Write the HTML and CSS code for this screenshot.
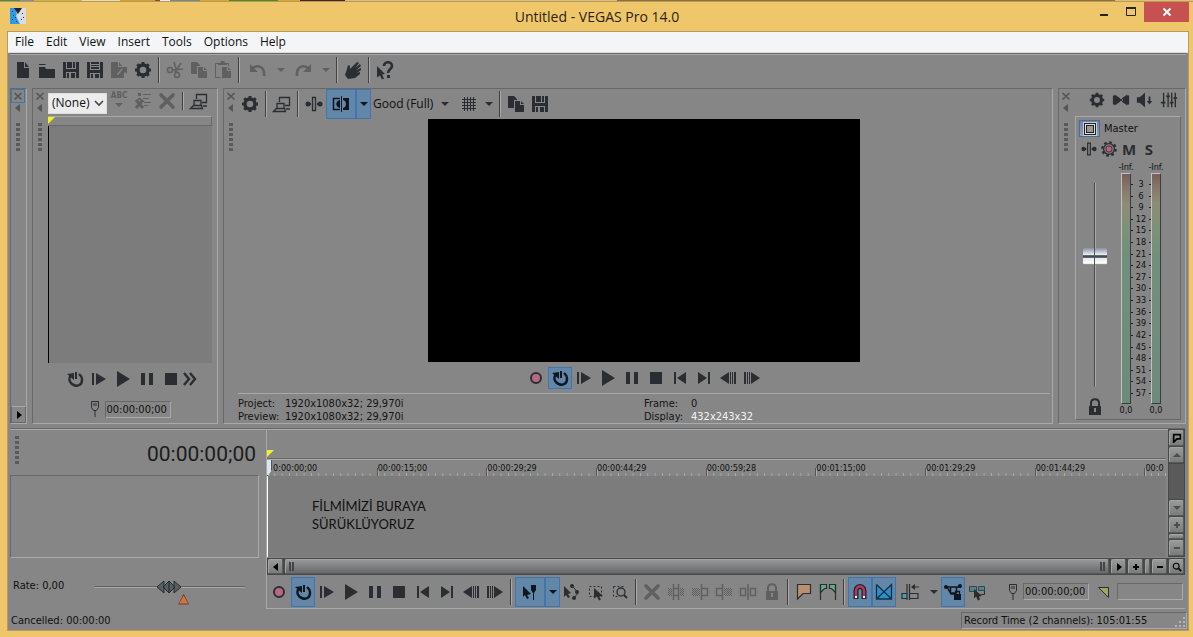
FILE: index.html
```html
<!DOCTYPE html>
<html lang="en">
<head>
<meta charset="utf-8">
<title>Untitled - VEGAS Pro 14.0</title>
<link rel="stylesheet" href="styles.css">
</head>
<body>
<svg class="defs" width="0" height="0" aria-hidden="true">
  <defs>
    <pattern id="hatch" width="2" height="2" patternUnits="userSpaceOnUse"><path d="M0 0h1v1H0zM1 1h1v1H1z" fill="#606060"/></pattern>
  </defs>
  <symbol id="i-new" viewBox="0 0 20 20"><path fill="currentColor" d="M4 2h7v6h5v10H4z"/><path fill="currentColor" d="M12 2l4 5h-4z"/></symbol>
  <symbol id="i-open" viewBox="0 0 20 20"><path fill="currentColor" d="M2 4h6l1 1H2zM2 7h6l1 2h9v9H2z"/></symbol>
  <symbol id="i-save" viewBox="0 0 20 20"><path fill="currentColor" d="M2 2h3v7h10V2h3v16h-3v-6H5v6H2zM6 2h5v6H6zM12 2h2v6h-2zM6 13h2v5H6zM10 13h4v5h-4z"/></symbol>
  <symbol id="i-saveas" viewBox="0 0 20 20"><path fill="currentColor" d="M2 2h3v8h10V2h3v16h-3v-5H5v5H2zM6 2h8v2H6zM6 5h8v1H6zM6 7h8v2H6zM6 14h2v4H6zM10 14h4v4h-4z"/></symbol>
  <symbol id="i-render" viewBox="0 0 20 20"><path fill="currentColor" d="M2 2h7v5h5l-6 7 2 2 5-4v6H2zM10 2l3 4h-3zM11 7h7v7l-2-2-5 5-2-2 5-6z"/></symbol>
  <symbol id="i-gear" viewBox="0 0 20 20"><circle cx="10" cy="10" r="5" fill="none" stroke="currentColor" stroke-width="3.4"/><path stroke="currentColor" stroke-width="3" d="M10 2v3M10 15v3M2 10h3M15 10h3M4.300 4.300l2 2M13.700 13.700l2 2M4.300 15.700l2-2M13.700 6.300l2-2"/></symbol>
  <symbol id="i-cut" viewBox="0 0 20 20"><g fill="none" stroke="currentColor" stroke-width="1.600"><circle cx="5" cy="10" r="2.500"/><circle cx="12" cy="15" r="2.500"/><path d="M7 10l11-1M12 12L9 2M10 12l6-9"/></g></symbol>
  <symbol id="i-copy" viewBox="0 0 20 20"><path fill="currentColor" d="M2 2h6l3 3v1H8v8H2zM9 7h5v4h4v7H9zM15 7l3 3h-3z"/></symbol>
  <symbol id="i-paste" viewBox="0 0 20 20"><path fill="none" stroke="currentColor" d="M7.500 17.500h-5v-14h13V6"/><path fill="currentColor" d="M5 3h2l1-2h3l1 2h2v2H5zM9 7h5v4h4v7H9zM15 7l3 3h-3z"/></symbol>
  <symbol id="i-undo" viewBox="0 0 20 20"><path d="M4 9c5-5 13-3 12 7" fill="none" stroke="currentColor" stroke-width="2.600"/><path fill="currentColor" d="M2 4v8h8z"/></symbol>
  <symbol id="i-redo" viewBox="0 0 20 20"><path d="M16 9C11 4 3 6 4 16" fill="none" stroke="currentColor" stroke-width="2.600"/><path fill="currentColor" d="M18 4v8h-8z"/></symbol>
  <symbol id="i-caret" viewBox="0 0 10 10"><path fill="currentColor" d="M1 3h8L5 7z"/></symbol>
  <symbol id="i-hand" viewBox="0 0 20 20"><path fill="currentColor" d="M4 9l1-4 2 1v3l7-7 2 1-4 5 5-4 1 2-5 4 5-2v2l-4 3 3-1v2l-5 4-7 1-3-4z"/></symbol>
  <symbol id="i-help" viewBox="0 0 20 20"><path fill="currentColor" d="M2 6l8 8-3 .5 2 4-2 1-2-4-3 2z"/><path d="M9 6c0-5 8-5 8 0 0 3-4 3-4 7" fill="none" stroke="currentColor" stroke-width="2.600"/><path fill="currentColor" d="M12 15h3v3h-3z"/></symbol>
  <symbol id="i-x" viewBox="0 0 10 10"><path stroke="currentColor" stroke-width="1.700" d="M1.500 2l7 6.500M8.500 2l-7 6.500"/></symbol>
  <symbol id="i-left" viewBox="0 0 10 10"><path fill="currentColor" d="M7 1v8L2 5z"/></symbol>
  <symbol id="i-right" viewBox="0 0 10 10"><path fill="currentColor" d="M3 1v8l5-4z"/></symbol>
  <symbol id="i-up" viewBox="0 0 10 10"><path fill="currentColor" d="M1 7h8L5 3z"/></symbol>
  <symbol id="i-list" viewBox="0 0 20 20"><path fill="currentColor" d="M5 2h3v3H5zM10 3h8v1h-8zM5 7h3v2H5zM10 7h6v1h-6zM11 11h7v1h-7zM11 14h4v1h-4z"/><path d="M3 9l7 8M10 9l-7 8" stroke="currentColor" stroke-width="3"/></symbol>
  <symbol id="i-bigx" viewBox="0 0 20 20"><path stroke="currentColor" stroke-width="3.600" stroke-linecap="round" d="M4 4l12 12M16 4L4 16"/></symbol>
  <symbol id="i-monitor" viewBox="0 0 20 20"><path fill="none" stroke="currentColor" stroke-width="1.300" d="M7.500 8V3.500h10v8H13M5 9.500h7v5H5zM1.500 17.500l3-3h8l1 3zM14 15h4"/></symbol>
  <symbol id="i-fx" viewBox="0 0 20 20"><path stroke="currentColor" stroke-width="2" d="M3 10h4M13 10h4"/><path fill="none" stroke="currentColor" stroke-width="1.300" d="M8.500 3.500h3v13h-3z"/><circle cx="4" cy="10" r="2.500" fill="currentColor"/><circle cx="16" cy="10" r="2.500" fill="currentColor"/></symbol>
  <symbol id="i-split" viewBox="0 0 20 20"><path fill="none" stroke="currentColor" stroke-width="1.500" d="M9 4.500H2.500v11H9"/><path fill="currentColor" d="M10 2h1v16h-1zM12 4h6v12h-6v-2c4-1 4-7 0-8zM9 6v8c-5-1-5-7 0-8z"/></symbol>
  <symbol id="i-grid" viewBox="0 0 20 20"><path stroke="currentColor" d="M5.500 3v14M8.500 3v14M11.500 3v14M14.500 3v14M3 5.500h14M3 8.500h14M3 11.500h14M3 14.500h14"/></symbol>
  <symbol id="i-rec" viewBox="0 0 20 20"><circle cx="10" cy="10" r="5" fill="#b86880" stroke="#2b2e33" stroke-width="2"/></symbol>
  <symbol id="i-loop" viewBox="0 0 20 20"><path d="M6 6c-7 10 12 16 11 4 0-3-2-4-3-5" fill="none" stroke="currentColor" stroke-width="2.400"/><path fill="currentColor" d="M2 5l7-1v7z"/><path stroke="currentColor" stroke-width="2" d="M11 3v7"/></symbol>
  <symbol id="i-playstart" viewBox="0 0 20 20"><path fill="currentColor" d="M3 4h2v12H3zM7 4v12l10-6z"/></symbol>
  <symbol id="i-play" viewBox="0 0 20 20"><path fill="currentColor" d="M4 2v16l13-8z"/></symbol>
  <symbol id="i-pause" viewBox="0 0 20 20"><path fill="currentColor" d="M4 4h4v12H4zM12 4h4v12h-4z"/></symbol>
  <symbol id="i-stop" viewBox="0 0 20 20"><path fill="currentColor" d="M4 4h12v12H4z"/></symbol>
  <symbol id="i-first" viewBox="0 0 20 20"><path fill="currentColor" d="M4 4h2v12H4zM16 4v12l-9-6z"/></symbol>
  <symbol id="i-last" viewBox="0 0 20 20"><path fill="currentColor" d="M14 4h2v12h-2zM4 4v12l9-6z"/></symbol>
  <symbol id="i-prev" viewBox="0 0 20 20"><path fill="currentColor" d="M11 4v12L2 10zM12 4h1v12h-1zM14 4h1v12h-1zM16 4h2v12h-2z"/></symbol>
  <symbol id="i-next" viewBox="0 0 20 20"><path fill="currentColor" d="M9 4v12l9-6zM7 4h1v12H7zM5 4h1v12H5zM2 4h2v12H2z"/></symbol>
  <symbol id="i-more" viewBox="0 0 20 20"><path fill="none" stroke="currentColor" stroke-width="2.400" d="M4 4l5 6-5 6M10 4l5 6-5 6"/></symbol>
  <symbol id="i-pin" viewBox="0 0 10 20"><path fill="none" stroke="currentColor" d="M1.500 2.500h7v6l-2 3h-3l-2-3zM5 12v6M4 4v3M6 4v3"/></symbol>
  <symbol id="i-lock" viewBox="0 0 20 20"><path d="M6 9V6c0-5 8-5 8 0v3" fill="none" stroke="currentColor" stroke-width="2"/><path fill="currentColor" fill-rule="evenodd" d="M4 9h12v9H4zm5 2v4h2v-4z"/></symbol>
  <symbol id="i-dim" viewBox="0 0 20 20"><path fill="currentColor" d="M1 5h2v10H1zM3 4l6 4v4l-6 4zM19 5h-2v10h2zM17 4l-6 4v4l6 4zM8 9h4v2H8z"/></symbol>
  <symbol id="i-down" viewBox="0 0 20 20"><path fill="currentColor" d="M1 7h3l6-5v16l-6-5H1zM14 6h2v5h2l-3 4-3-4h2z"/></symbol>
  <symbol id="i-mixer" viewBox="0 0 20 20"><path stroke="currentColor" stroke-width="1.500" d="M4 2v16M9 2v16M13 2v16M17 2v16"/><path stroke="currentColor" stroke-width="2" d="M1 13h5M7 6h4M11 13h4M15 8h4"/></symbol>
  <symbol id="i-auto" viewBox="0 0 20 20"><circle cx="10" cy="10" r="7.500" fill="none" stroke="currentColor" stroke-width="2.400" stroke-dasharray="3 2.900"/><circle cx="10" cy="10" r="6" fill="none" stroke="currentColor" stroke-width="1.500"/><circle cx="10" cy="10" r="3.500" fill="#c0607c" stroke="#2b2e33"/></symbol>
  <symbol id="i-edit" viewBox="0 0 20 20"><path fill="currentColor" d="M3 4l8 8-4 1 2 3-2 1-2-4-2 2zM11 3h5v5l-2 3h-1l-2-3zM13 10h1v8h-1z"/></symbol>
  <symbol id="i-env" viewBox="0 0 20 20"><path fill="currentColor" d="M2 4l7 7-3 1 2 3-2 1-2-3-2 2z"/><path fill="none" stroke="currentColor" d="M10 4l3 3 3 4-4 5"/><circle cx="10" cy="4" r="2" fill="currentColor"/><circle cx="15" cy="10" r="2" fill="currentColor"/><circle cx="12" cy="16" r="2" fill="currentColor"/></symbol>
  <symbol id="i-select" viewBox="0 0 20 20"><path fill="none" stroke="currentColor" stroke-dasharray="2 2" d="M3.500 4.500h12v10h-12z"/><path fill="currentColor" d="M8 6l9 8-4 .5 2 3-2 1-2-4-3 2z"/></symbol>
  <symbol id="i-zoomtool" viewBox="0 0 20 20"><path fill="none" stroke="currentColor" stroke-dasharray="2 2" d="M3.500 4.500h11M3.500 4.500v10h4"/><circle cx="11" cy="10" r="4" fill="none" stroke="currentColor" stroke-width="1.300"/><path stroke="currentColor" stroke-width="2" d="M14 13l3 3"/></symbol>
  <symbol id="i-trim1" viewBox="0 0 20 20"><path fill="url(#hatch)" d="M2 6h4v8H2zM14 6h4v8h-4z"/><path fill="none" stroke="currentColor" stroke-width="1.500" d="M7.500 6.500h5v7h-5zM7.500 2v16M12.500 2v16"/></symbol>
  <symbol id="i-trim2" viewBox="0 0 20 20"><path fill="url(#hatch)" d="M2 6h8v8H2z"/><path fill="none" stroke="currentColor" stroke-width="1.500" d="M11.500 2v16M11.500 6.500h6v7h-6z"/></symbol>
  <symbol id="i-trim3" viewBox="0 0 20 20"><path fill="url(#hatch)" d="M10 6h8v8h-8z"/><path fill="none" stroke="currentColor" stroke-width="1.500" d="M8.500 2v16M8.500 6.500h-6v7h6z"/></symbol>
  <symbol id="i-trim4" viewBox="0 0 20 20"><path fill="none" stroke="currentColor" stroke-width="1.500" d="M10 2v16M2.500 6.500h5v7h-5zM12.500 6.500h5v7h-5z"/></symbol>
  <symbol id="i-marker" viewBox="0 0 20 20"><path fill="#b89070" stroke="#2b2e33" stroke-width="1.200" d="M3.500 17V2.500h13v9H9z"/></symbol>
  <symbol id="i-region" viewBox="0 0 20 20"><path fill="#5fae8e" stroke="#2b2e33" stroke-width="1.200" d="M2.500 2.500h6v4h-2l-4 4zM17.500 2.500h-6v4h2l4 4z"/><path stroke="#2b2e33" stroke-width="1.200" d="M2.500 3v15M17.500 3v15"/></symbol>
  <symbol id="i-magnet" viewBox="0 0 20 20"><path d="M6 17V9c0-6 8-6 8 0v8" fill="none" stroke="#20242c" stroke-width="5"/><path d="M6 16V9c0-6 8-6 8 0v7" fill="none" stroke="#b8385c" stroke-width="2.500"/><path stroke="#fff" stroke-width="2" d="M5 15h2M13 15h2"/></symbol>
  <symbol id="i-fade" viewBox="0 0 20 20"><path fill="#2493d2" d="M2 3l8 7 8-7v14H2z"/><path fill="none" stroke="#1c2b3c" stroke-width="1.300" d="M2.500 2.500v14.500h15V2.500l-15 14.500M2.500 2.500l15 14.500"/></symbol>
  <symbol id="i-ripple" viewBox="0 0 20 20"><path fill="#45a0b8" d="M1 11h5v6H1z"/><path fill="none" stroke="currentColor" stroke-width="1.200" d="M1 11.500h5v5H1zM6 2v16M8.500 2v16M9 11.500h8v5H9M11 5h7"/><path fill="currentColor" d="M10 5l4-3v6z"/></symbol>
  <symbol id="i-lockenv" viewBox="0 0 20 20"><path fill="none" stroke="currentColor" stroke-width="1.500" d="M3 5h15M4 5l4 7h5M7.500 5v6h6V5"/><circle cx="3" cy="5" r="2" fill="currentColor"/><circle cx="17" cy="4" r="2" fill="currentColor"/><path fill="currentColor" d="M11 12h7v6h-7z"/><path fill="none" stroke="currentColor" stroke-width="1.300" d="M12.500 12V9.500h4V12"/></symbol>
  <symbol id="i-group" viewBox="0 0 20 20"><path fill="none" stroke="currentColor" d="M11.500 5.500h6v7h-4"/><path fill="#587f8c" stroke="#2b4854" d="M2.500 4.500h7v5h-7zM11.500 4.500h6v4h-6z"/><path fill="currentColor" d="M7 7l8 7-3 .5 1 3-2 1-2-4-2 2z"/></symbol>
  <symbol id="i-tri" viewBox="0 0 18 18"><path fill="#a6a35e" stroke="#2b2e33" d="M4.500 4.500h10v10z"/></symbol>
  <symbol id="i-lens" viewBox="0 0 12 12"><circle cx="5" cy="5" r="3.500" fill="none" stroke="currentColor" stroke-width="1.300"/><path stroke="currentColor" stroke-width="2" d="M8 8l3 3"/></symbol>
  <symbol id="i-plus" viewBox="0 0 10 10"><path stroke="currentColor" stroke-width="2" d="M5 2v6M2 5h6"/></symbol>
  <symbol id="i-minus" viewBox="0 0 10 10"><path stroke="currentColor" stroke-width="2" d="M2 5h6"/></symbol>
  <symbol id="i-flag" viewBox="0 0 12 12"><path fill="none" stroke="currentColor" stroke-width="2" d="M2 12V2h8v5H6l-3 3"/></symbol>
</svg>

<div class="desktop-edge"></div>
<header class="titlebar">
  <svg class="logo" viewBox="0 0 16 16" aria-hidden="true"><path fill="#2a9be6" d="M0 0h5l5 16H0z"/><path fill="#d9dce0" d="M10 0h6v16h-6L6 8z"/><path fill="#1d2630" d="M4 0h8L8 6z"/><path fill="#123a5c" d="M2 3h1v1H2zM3 7h1v1H3zM2 11h1v1H2zM5 9h1v1H5zM6 13h1v1H6zM12 5h1v1h-1zM13 9h1v1h-1zM11 11h1v1h-1z"/></svg>
  <h1 class="title">Untitled - VEGAS Pro 14.0</h1>
  <div class="win-buttons">
    <button class="win" aria-label="Minimize"><svg viewBox="0 0 12 12"><path fill="#2a2418" d="M2 8h8v2H2z"/></svg></button>
    <button class="win" aria-label="Maximize"><svg viewBox="0 0 12 12"><path fill="none" stroke="#2a2418" d="M1.500 2v7.500h9V2"/><path fill="#2a2418" d="M1 1h10v2H1z"/></svg></button>
    <button class="win close" aria-label="Close"><svg viewBox="0 0 12 12"><path stroke="#fff" stroke-width="2" d="M2.500 2.500l7 7M9.500 2.500l-7 7"/></svg></button>
  </div>
</header>

<div class="window">
  <nav class="menu">
    <button>File</button><button>Edit</button><button>View</button><button>Insert</button><button>Tools</button><button>Options</button><button>Help</button>
  </nav>

  <div class="toolbar main-tools">
    <button class="tool" aria-label="New"><svg><use href="#i-new"/></svg></button>
    <button class="tool" aria-label="Open"><svg><use href="#i-open"/></svg></button>
    <button class="tool" aria-label="Save"><svg><use href="#i-save"/></svg></button>
    <button class="tool" aria-label="Save as"><svg><use href="#i-saveas"/></svg></button>
    <button class="tool dim" aria-label="Render as"><svg><use href="#i-render"/></svg></button>
    <button class="tool" aria-label="Properties"><svg><use href="#i-gear"/></svg></button>
    <span class="sep"></span>
    <button class="tool dim" aria-label="Cut"><svg><use href="#i-cut"/></svg></button>
    <button class="tool dim" aria-label="Copy"><svg><use href="#i-copy"/></svg></button>
    <button class="tool dim" aria-label="Paste"><svg><use href="#i-paste"/></svg></button>
    <span class="sep"></span>
    <button class="tool wide dim" aria-label="Undo"><svg><use href="#i-undo"/></svg></button>
    <button class="caret dim" aria-label="Undo history"><svg><use href="#i-caret"/></svg></button>
    <button class="tool wide dim" aria-label="Redo"><svg><use href="#i-redo"/></svg></button>
    <button class="caret dim" aria-label="Redo history"><svg><use href="#i-caret"/></svg></button>
    <span class="sep"></span>
    <button class="tool" aria-label="Interactive tutorials"><svg><use href="#i-hand"/></svg></button>
    <span class="sep"></span>
    <button class="tool" aria-label="What's this help"><svg><use href="#i-help"/></svg></button>
  </div>

  <main class="panels">
    <section class="panel collapsed" aria-label="Collapsed dock">
      <div class="gutter focused">
        <button aria-label="Close"><svg><use href="#i-x"/></svg></button>
        <button aria-label="Collapse"><svg><use href="#i-left"/></svg></button>
        <span class="grip"></span>
      </div>
      <button class="expand" aria-label="Expand"><svg><use href="#i-right"/></svg></button>
    </section>

    <section class="panel trimmer" aria-label="Trimmer">
      <div class="gutter">
        <button aria-label="Close"><svg><use href="#i-x"/></svg></button>
        <button aria-label="Collapse"><svg><use href="#i-left"/></svg></button>
        <span class="grip"></span>
      </div>
      <div class="trim-body">
        <div class="toolbar trim-tools">
          <select class="media" aria-label="Trimmer media"><option>(None)</option></select>
          <button class="tool abc dim" aria-label="Sort"><span>ABC</span><svg><use href="#i-caret"/></svg></button>
          <button class="tool dim" aria-label="Clear history"><svg><use href="#i-list"/></svg></button>
          <button class="tool dim" aria-label="Remove"><svg><use href="#i-bigx"/></svg></button>
          <span class="sep short"></span>
          <button class="tool" aria-label="External monitor"><svg><use href="#i-monitor"/></svg></button>
        </div>
        <div class="trim-ruler"><i class="loop-mark"></i></div>
        <div class="trim-view"></div>
        <div class="transport">
          <button class="tool" aria-label="Loop"><svg><use href="#i-loop"/></svg></button>
          <button class="tool" aria-label="Play from start"><svg><use href="#i-playstart"/></svg></button>
          <button class="tool" aria-label="Play"><svg><use href="#i-play"/></svg></button>
          <button class="tool" aria-label="Pause"><svg><use href="#i-pause"/></svg></button>
          <button class="tool" aria-label="Stop"><svg><use href="#i-stop"/></svg></button>
          <button class="caret more" aria-label="More"><svg><use href="#i-more"/></svg></button>
        </div>
        <div class="cursor-row">
          <svg class="pin" aria-hidden="true"><use href="#i-pin"/></svg>
          <input class="time" aria-label="Trimmer cursor position" value="00:00:00;00">
        </div>
      </div>
    </section>

    <section class="panel preview" aria-label="Video preview">
      <div class="gutter">
        <button aria-label="Close"><svg><use href="#i-x"/></svg></button>
        <button aria-label="Collapse"><svg><use href="#i-left"/></svg></button>
        <span class="grip"></span>
      </div>
      <div class="preview-body">
        <div class="toolbar preview-tools">
          <button class="tool" aria-label="Project properties"><svg><use href="#i-gear"/></svg></button>
          <span class="sep"></span>
          <button class="tool" aria-label="External monitor"><svg><use href="#i-monitor"/></svg></button>
          <span class="sep"></span>
          <button class="tool" aria-label="Video output FX"><svg><use href="#i-fx"/></svg></button>
          <button class="tool wide on" aria-label="Split screen view"><svg><use href="#i-split"/></svg></button>
          <button class="caret on" aria-label="Split screen options"><svg><use href="#i-caret"/></svg></button>
          <button class="quality">Good (Full)<svg><use href="#i-caret"/></svg></button>
          <button class="tool" aria-label="Overlays"><svg><use href="#i-grid"/></svg></button>
          <button class="caret" aria-label="Overlay options"><svg><use href="#i-caret"/></svg></button>
          <span class="sep"></span>
          <button class="tool" aria-label="Copy snapshot"><svg><use href="#i-copy"/></svg></button>
          <button class="tool" aria-label="Save snapshot"><svg><use href="#i-save"/></svg></button>
        </div>
        <div class="screen"></div>
        <div class="transport">
          <button class="tool" aria-label="Record"><svg><use href="#i-rec"/></svg></button>
          <button class="tool on" aria-label="Loop"><svg><use href="#i-loop"/></svg></button>
          <button class="tool" aria-label="Play from start"><svg><use href="#i-playstart"/></svg></button>
          <button class="tool" aria-label="Play"><svg><use href="#i-play"/></svg></button>
          <button class="tool" aria-label="Pause"><svg><use href="#i-pause"/></svg></button>
          <button class="tool" aria-label="Stop"><svg><use href="#i-stop"/></svg></button>
          <button class="tool" aria-label="Go to start"><svg><use href="#i-first"/></svg></button>
          <button class="tool" aria-label="Go to end"><svg><use href="#i-last"/></svg></button>
          <button class="tool" aria-label="Previous frame"><svg><use href="#i-prev"/></svg></button>
          <button class="tool" aria-label="Next frame"><svg><use href="#i-next"/></svg></button>
        </div>
        <div class="info">
          <dl>
            <dt>Project:</dt><dd>1920x1080x32; 29,970i</dd>
            <dt>Preview:</dt><dd>1920x1080x32; 29,970i</dd>
          </dl>
          <dl>
            <dt>Frame:</dt><dd>0</dd>
            <dt>Display:</dt><dd class="lit">432x243x32</dd>
          </dl>
        </div>
      </div>
    </section>

    <section class="panel mixer" aria-label="Master bus">
      <div class="gutter">
        <button aria-label="Close"><svg><use href="#i-x"/></svg></button>
        <button aria-label="Collapse"><svg><use href="#i-left"/></svg></button>
        <span class="grip"></span>
      </div>
      <div class="mixer-body">
        <div class="toolbar mixer-tools">
          <button class="tool" aria-label="Audio properties"><svg><use href="#i-gear"/></svg></button>
          <button class="tool" aria-label="Downmix output"><svg><use href="#i-dim"/></svg></button>
          <button class="tool" aria-label="Dim output"><svg><use href="#i-down"/></svg></button>
          <button class="tool" aria-label="Mixing console"><svg><use href="#i-mixer"/></svg></button>
        </div>
        <div class="bus">
          <div class="bus-name"><button class="bus-icon" aria-label="Master output"><i></i></button><span>Master</span></div>
          <div class="bus-tools">
            <button aria-label="Master FX"><svg><use href="#i-fx"/></svg></button>
            <button aria-label="Automation settings"><svg><use href="#i-auto"/></svg></button>
            <button>M</button>
            <button>S</button>
          </div>
          <div class="strip">
            <div class="fader-col">
              <input class="fader" type="range" min="0" max="100" value="65" aria-label="Master volume">
              <button class="fader-lock" aria-label="Lock fader channels"><svg><use href="#i-lock"/></svg></button>
            </div>
            <div class="meters">
              <div class="pair"><span>-Inf.</span><span>-Inf.</span></div>
              <div class="scale">
                <i class="meter"></i>
                <ul>
                  <li>3</li><li>6</li><li>9</li><li>12</li><li>15</li><li>18</li><li>21</li><li>24</li><li>27</li><li>30</li><li>33</li><li>36</li><li>39</li><li>42</li><li>45</li><li>48</li><li>51</li><li>54</li><li>57</li>
                </ul>
                <i class="meter"></i>
              </div>
              <div class="pair"><span>0,0</span><span>0,0</span></div>
            </div>
          </div>
        </div>
      </div>
    </section>
  </main>

  <section class="timeline" aria-label="Timeline">
    <div class="tracks">
      <div class="track-head"><span class="grip"></span><output class="clock">00:00:00;00</output></div>
      <div class="track-list"></div>
      <div class="rate">
        <label for="rate">Rate: 0,00</label>
        <div class="rate-slider"><input id="rate" type="range" min="0" max="100" value="49"><i class="rate-mark"></i></div>
      </div>
    </div>
    <div class="edit">
      <div class="edit-top">
        <div class="canvas">
          <div class="marker-bar"><i class="loop-mark"></i></div>
          <div class="ruler">
            <span>0:00:00;00</span><span>00:00:15;00</span><span>00:00:29;29</span><span>00:00:44;29</span><span>00:00:59;28</span><span>00:01:15;00</span><span>00:01:29;29</span><span>00:01:44;29</span><span class="last">00:0</span>
            <i class="playhead"></i>
          </div>
          <div class="track-area"><p>FİLMİMİZİ BURAYA<br>SÜRÜKLÜYORUZ</p></div>
        </div>
        <div class="vscroll">
          <button class="sb hot" aria-label="Markers"><svg><use href="#i-flag"/></svg></button>
          <button class="sb" aria-label="Scroll up"><svg><use href="#i-up"/></svg></button>
          <div class="vtrack"></div>
          <button class="sb" aria-label="Scroll down"><svg><use href="#i-caret"/></svg></button>
          <button class="sb" aria-label="Taller tracks"><svg><use href="#i-plus"/></svg></button>
          <i class="sb nub"></i>
          <button class="sb" aria-label="Shorter tracks"><svg><use href="#i-minus"/></svg></button>
        </div>
      </div>
      <div class="hscroll">
        <button class="sb hot" aria-label="Scroll left"><svg><use href="#i-left"/></svg></button>
        <div class="sb hthumb"><i></i><i></i></div>
        <button class="sb hot" aria-label="Scroll right"><svg><use href="#i-right"/></svg></button>
        <button class="sb hot" aria-label="Zoom in"><svg><use href="#i-plus"/></svg></button>
        <i class="sb nub"></i>
        <button class="sb hot" aria-label="Zoom out"><svg><use href="#i-minus"/></svg></button>
        <button class="sb hot" aria-label="Zoom tool"><svg><use href="#i-lens"/></svg></button>
      </div>
      <div class="toolbar edit-tools">
        <button class="tool" aria-label="Record"><svg><use href="#i-rec"/></svg></button>
        <button class="tool on" aria-label="Loop"><svg><use href="#i-loop"/></svg></button>
        <button class="tool" aria-label="Play from start"><svg><use href="#i-playstart"/></svg></button>
        <button class="tool" aria-label="Play"><svg><use href="#i-play"/></svg></button>
        <button class="tool" aria-label="Pause"><svg><use href="#i-pause"/></svg></button>
        <button class="tool" aria-label="Stop"><svg><use href="#i-stop"/></svg></button>
        <button class="tool" aria-label="Go to start"><svg><use href="#i-first"/></svg></button>
        <button class="tool" aria-label="Go to end"><svg><use href="#i-last"/></svg></button>
        <button class="tool" aria-label="Previous frame"><svg><use href="#i-prev"/></svg></button>
        <button class="tool" aria-label="Next frame"><svg><use href="#i-next"/></svg></button>
        <span class="sep"></span>
        <button class="tool wide on" aria-label="Normal edit tool"><svg><use href="#i-edit"/></svg></button>
        <button class="caret on" aria-label="Edit tool options"><svg><use href="#i-caret"/></svg></button>
        <button class="tool" aria-label="Envelope tool"><svg><use href="#i-env"/></svg></button>
        <button class="tool" aria-label="Selection tool"><svg><use href="#i-select"/></svg></button>
        <button class="tool" aria-label="Zoom edit tool"><svg><use href="#i-zoomtool"/></svg></button>
        <span class="sep"></span>
        <button class="tool dim" aria-label="Delete"><svg><use href="#i-bigx"/></svg></button>
        <button class="tool dim" aria-label="Trim"><svg><use href="#i-trim1"/></svg></button>
        <button class="tool dim" aria-label="Trim start"><svg><use href="#i-trim2"/></svg></button>
        <button class="tool dim" aria-label="Trim end"><svg><use href="#i-trim3"/></svg></button>
        <button class="tool dim" aria-label="Split"><svg><use href="#i-trim4"/></svg></button>
        <button class="tool dim" aria-label="Lock event"><svg><use href="#i-lock"/></svg></button>
        <span class="sep"></span>
        <button class="tool" aria-label="Insert marker"><svg><use href="#i-marker"/></svg></button>
        <button class="tool" aria-label="Insert region"><svg><use href="#i-region"/></svg></button>
        <span class="sep"></span>
        <button class="tool on" aria-label="Enable snapping"><svg><use href="#i-magnet"/></svg></button>
        <button class="tool on" aria-label="Automatic crossfades"><svg><use href="#i-fade"/></svg></button>
        <button class="tool wide" aria-label="Auto ripple"><svg><use href="#i-ripple"/></svg></button>
        <button class="caret" aria-label="Auto ripple options"><svg><use href="#i-caret"/></svg></button>
        <button class="tool on" aria-label="Lock envelopes to events"><svg><use href="#i-lockenv"/></svg></button>
        <button class="tool" aria-label="Ignore event grouping"><svg><use href="#i-group"/></svg></button>
        <div class="edit-times">
          <svg class="pin" aria-hidden="true"><use href="#i-pin"/></svg>
          <input class="time" aria-label="Cursor position" value="00:00:00;00">
          <svg class="tri" aria-hidden="true"><use href="#i-tri"/></svg>
          <input class="time" aria-label="Selection length" value="">
        </div>
      </div>
    </div>
  </section>

  <footer class="status">
    <span>Cancelled: 00:00:00</span>
    <span class="record">Record Time (2 channels): 105:01:55<svg viewBox="0 0 12 12" aria-hidden="true"><path fill="#b4b4b4" d="M9 1h2v2H9zM5 5h2v2H5zM9 5h2v2H9zM1 9h2v2H1zM5 9h2v2H5zM9 9h2v2H9z"/></svg></span>
  </footer>
</div>
</body>
</html>
```
FILE: styles.css
```css
:root {
  --bg: #868686;
  --ink: #2a2d31;
  --dim: #606060;
  --light: #a9a9a9;
  --dark: #686868;
  --on: #6387a9;
  --on-line: #3f76ae;
  --gold: #efc76a;
}
* { box-sizing: border-box; }
body {
  margin: 0;
  min-height: 100vh;
  display: flex;
  flex-direction: column;
  background: var(--gold);
  font: 11px/13px "DejaVu Sans Condensed", "DejaVu Sans", sans-serif;
  color: #101010;
}
button {
  margin: 0; padding: 0; border: 0;
  background: none; color: inherit; font: inherit;
  display: flex; align-items: center; justify-content: center;
}
h1, p, dl, dd, ul { margin: 0; padding: 0; }
.defs { position: absolute; }

.desktop-edge {
  height: 2px;
  border-bottom: 1px solid #b89a58;
  background: linear-gradient(90deg, #4d8a50 0 20px, #7d8fb0 20px 34px, #d8b040 34px 82px, #e8dcb8 82px 120px, #d8a020 120px 155px, #805030 155px 160px, #eee 160px 170px, #6a8c9a 170px 200px, #d8a828 200px 229px, #4c8a20 229px 278px, #d8a828 278px 300px, #502020 300px 345px, #d8c080 345px 617px, #8a7040 617px 1115px, #dfc070 1115px);
}
.titlebar { height: 29px; display: flex; align-items: flex-start; padding: 0 4px 0 10px; }
.logo { width: 16px; height: 16px; margin-top: 6px; }
.title { flex: 1; text-align: center; font: 14px/20px "Open Sans", sans-serif; padding-top: 5px; padding-left: 78px; color: #2c2414; }
.win-buttons { display: flex; }
.win { width: 27px; height: 20px; }
.win svg { width: 12px; height: 12px; }
.win.close { width: 45px; background: #c75050; }

.window {
  flex: 1;
  display: flex; flex-direction: column;
  margin: 0 4px 6px 7px;
  border: 1px solid #b99a5c;
  background: var(--bg);
}
.menu {
  display: flex; height: 21px; background: #f4f5f7;
  font: 12px/20px "Open Sans", sans-serif; color: #111;
  gap: 12px; padding-left: 7px;
  border-bottom: 1px solid #dcdcdc;
}

.toolbar { display: flex; align-items: center; }
.tool { flex: none; width: 24px; height: 22px; color: var(--ink); }
.tool svg, .more svg { width: 20px; height: 20px; flex: none; }
.tool.wide { width: 30px; }
.caret { flex: none; width: 15px; height: 22px; color: var(--ink); }
.caret:not(.more) svg, .quality svg { width: 10px; height: 10px; flex: none; }
.tool.dim, .caret.dim { color: var(--dim); }
.tool.on, .caret.on { background: var(--on); border: 1px solid var(--on-line); color: #10161e; }
.sep { flex: none; width: 2px; height: 26px; margin: 0 3px; border-left: 1px solid #404040; border-right: 1px solid var(--light); }
.sep.short { height: 18px; }
.main-tools { height: 35px; margin: 0 2px; padding: 0 0 2px 1px; border-top: 1px solid var(--dark); box-shadow: inset 0 1px var(--light); }

.panels { display: flex; gap: 5px; margin: 0 2px; }
.panel { border: 1px solid var(--dark); border-right-color: var(--light); border-bottom-color: var(--light); display: flex; }
.gutter { flex: none; width: 14px; display: flex; flex-direction: column; align-items: center; padding-top: 1px; color: #555; }
.gutter button { width: 12px; height: 12px; }
.gutter svg { width: 10px; height: 10px; }
.focused button:first-child { outline: 1px solid var(--on-line); }
.grip { width: 4px; height: 30px; margin-top: 8px; background: radial-gradient(circle, #5a5a5a 0 2px, transparent 2px) 0 0 / 4px 5px; }
.collapsed { width: 17px; flex-direction: column; justify-content: space-between; }
.expand { width: 15px; height: 17px; border: 1px solid var(--dark); border-top-color: var(--light); color: #000; }
.expand svg { width: 10px; height: 10px; }

.trimmer { width: 186px; }
.trim-body { flex: 1; padding: 0 5px 0 1px; display: flex; flex-direction: column; }
.trim-tools { height: 27px; padding-bottom: 3px; }
.media {
  width: 59px; height: 21px; padding: 0 3px; margin-top: 4px;
  border: 1px solid #ddd; border-radius: 0; color: #111;
  appearance: none;
  background: url("data:image/svg+xml,%3Csvg xmlns='http://www.w3.org/2000/svg' viewBox='0 0 10 10'%3E%3Cpath d='M1 3l4 4 4-4' fill='none' stroke='%23444' stroke-width='1.6'/%3E%3C/svg%3E") right 2px center / 10px 10px no-repeat, #ececec;
  font: 12px/18px "Open Sans", sans-serif;
}
.abc { flex-direction: column; font: bold 8px/8px "DejaVu Sans Condensed", sans-serif; }
.abc.tool svg { width: 12px; height: 10px; }
.trim-ruler { position: relative; height: 10px; border: 1px solid var(--dark); border-top-color: var(--light); border-left: 0; }
.loop-mark { position: absolute; left: 0; bottom: 1px; width: 7px; height: 7px; background: #f5f020; clip-path: polygon(0 0, 100% 0, 0 100%); }
.trim-view { height: 237px; background: #7c7c7c; border-left: 1px solid #000; }
.transport { display: flex; justify-content: center; margin-top: 5px; }
.cursor-row { display: flex; justify-content: center; align-items: center; gap: 5px; margin-top: 9px; height: 20px; }
.pin { width: 10px; height: 20px; color: var(--ink); }
.time {
  width: 66px; height: 17px; padding: 0 1px;
  border: 1px solid var(--light); border-top-color: var(--dark); border-left-color: var(--dark); border-radius: 0;
  background: transparent; color: #101010; font: inherit;
}

.preview { flex: 1; min-width: 0; }
.preview-body { flex: 1; display: flex; flex-direction: column; padding-right: 2px; }
.preview-tools { height: 30px; }
.preview-tools .on { height: 30px; }
.quality { font: 12px/18px "Open Sans", sans-serif; gap: 7px; padding: 0 7px 0 2px; white-space: nowrap; }
.quality svg { color: var(--ink); }
.screen { width: 432px; height: 243px; max-width: 100%; background: #000; align-self: center; }
.info { margin-top: 4px; border-top: 1px solid var(--light); padding: 3px 0 0; display: grid; grid-template-columns: 1fr 1fr; flex: 1; color: #141414; }
.info dl { display: grid; grid-template-columns: 47px 1fr; align-content: start; }
.lit { color: #f4f4f4; }

.mixer { width: 128px; }
.mixer-body { flex: 1; display: flex; flex-direction: column; padding: 0 4px 3px 2px; }
.mixer-tools { height: 27px; padding: 0 0 5px 10px; }
.mixer-tools .tool svg { width: 18px; height: 18px; }
.bus { flex: 1; border: 1px solid var(--light); border-bottom-color: var(--dark); border-right-color: var(--dark); padding: 3px 3px 0; }
.bus-name { display: flex; align-items: center; gap: 4px; }
.bus-icon { width: 21px; height: 17px; background: linear-gradient(#6d83a6, #8c9db8); border: 1px solid #53698c; }
.bus-icon i { width: 12px; height: 12px; border: 1px solid #222; outline: 1px solid #c4ccd8; background: #dcdcdc; display: grid; place-items: center; }
.bus-icon i::after { content: ""; width: 6px; height: 6px; border: 1px solid #222; background: #999; }
.bus-tools { display: flex; margin: 2px 0; }
.bus-tools button { width: 20px; height: 20px; font: bold 15px/20px "Open Sans", sans-serif; color: var(--ink); }
.bus-tools svg { width: 18px; height: 18px; }
.strip { display: flex; font-size: 9px; line-height: 12px; }
.fader-col { width: 32px; display: flex; flex-direction: column; align-items: center; padding-top: 22px; }
.fader { appearance: none; writing-mode: vertical-lr; direction: rtl; width: 24px; height: 204px; margin: 0; background: linear-gradient(90deg, #4c4c4c 50%, #aaa 50%) center / 2px 100% no-repeat; }
.fader::-webkit-slider-thumb { appearance: none; width: 24px; height: 17px; border-radius: 2px; background: linear-gradient(90deg, transparent 11px, #555 11px 12px, transparent 12px), linear-gradient(#8792a4 0, #eceef2 40%, #444b56 45% 55%, #e4e8ee 60%, #fff 90%, #666 100%); }
.fader-lock { margin-top: 10px; color: var(--ink); }
.fader-lock svg { width: 20px; height: 20px; }
.meters { width: 60px; }
.pair { display: grid; grid-template-columns: 30px 30px; text-align: center; }
.scale { display: grid; grid-template-columns: 10px 20px 10px; justify-content: center; height: 231px; }
.meter { border: 1px solid #c2c2c2; border-right-color: #3c3c3c; border-bottom-color: #3c3c3c; background: linear-gradient(#785e5c 0, #85786a 6%, #8d8c76 13%, #819078 22%, #71907c 34%, #6d8b7c 100%); }
.scale ul { list-style: none; line-height: 11px; text-align: center; display: flex; flex-direction: column; justify-content: space-between; padding: 6px 0 5px; }
.scale li { display: flex; justify-content: space-between; align-items: center; }
.scale li::before, .scale li::after { content: ""; width: 2px; height: 1px; background: #222; }

.timeline { flex: 1; display: flex; gap: 7px; margin: 4px 3px 0 2px; border-top: 1px solid var(--dark); box-shadow: inset 0 1px var(--light); }
.tracks { width: 249px; display: flex; flex-direction: column; }
.track-head { height: 46px; display: flex; justify-content: space-between; align-items: center; padding: 4px 3px 0 5px; }
.track-head .grip { margin: 0 0 8px; }
.clock { font: 21px/24px Roboto, sans-serif; color: #1c1c1c; }
.track-list { flex: 1; border: 1px solid var(--dark); border-right-color: var(--light); border-bottom-color: var(--light); }
.rate { height: 51px; display: flex; align-items: center; padding: 4px 14px 0 3px; gap: 31px; white-space: nowrap; }
.rate-slider { position: relative; flex: 1; height: 20px; }
.rate input { appearance: none; display: block; width: 100%; height: 22px; margin: 0; background: linear-gradient(#606060 50%, #a8a8a8 50%) center / 100% 2px no-repeat; }
.rate input::-webkit-slider-thumb { appearance: none; width: 26px; height: 14px; background: url("data:image/svg+xml,%3Csvg xmlns='http://www.w3.org/2000/svg' viewBox='0 0 26 14'%3E%3Cpath d='M1 7l7-6v12zM25 7l-7-6v12zM13 1l6 6-6 6-6-6z' fill='%23566064' stroke='%23292d30'/%3E%3Cpath d='M13 1v12' stroke='%23202020'/%3E%3C/svg%3E"); }
.rate-mark { position: absolute; left: 83px; top: 18px; width: 11px; height: 11px; background: #7a3a28; clip-path: polygon(50% 0, 100% 100%, 0 100%); }
.rate-mark::after { content: ""; position: absolute; inset: 2px 1px 1px; background: #cf7440; clip-path: polygon(50% 0, 100% 100%, 0 100%); }

.edit { flex: 1; min-width: 0; display: flex; flex-direction: column; border-left: 1px solid var(--light); border-bottom: 1px solid var(--light); }
.edit-top { flex: 1; display: flex; gap: 2px; }
.canvas { flex: 1; min-width: 0; display: flex; flex-direction: column; }
.marker-bar { position: relative; height: 30px; border-bottom: 1px solid var(--dark); }
.ruler { position: relative; height: 17px; display: flex; overflow: hidden; border-top: 1px solid var(--light); font-size: 9px; line-height: 16px; }
.ruler span {
  flex: 0 0 12.2%; padding-left: 1px; white-space: nowrap;
  background: linear-gradient(90deg, #555 1px, #aaa 1px 2px, transparent 2px) 0 100% / 100% 8px no-repeat, linear-gradient(90deg, #aaa 1px, transparent 1px) 0 100% / calc(100% / 15) 3px repeat-x;
}
.ruler span:first-child { padding-left: 6px; }
.ruler span.last { flex: 1; min-width: 0; background-size: 100% 8px, 7px 3px; }
.playhead { position: absolute; left: 0; top: 0; width: 5px; height: 15px; background: #dde4ec; border-right: 1px solid #4d5864; clip-path: polygon(0 0, 100% 0, 100% 65%, 30% 100%, 0 100%); }
.track-area { flex: 1; background: #7c7c7c; border-left: 1px solid #fff; padding: 21px 44px; font: 13px/18px Lato, sans-serif; color: #101010; }
.vscroll { width: 17px; display: flex; flex-direction: column; background: #484848; gap: 1px; padding: 1px; }
.vtrack { flex: 1; background: #5a5a5a; }
.sb { flex: none; width: 15px; height: 16px; border: 1px solid #a4a4a4; border-right-color: #5a5a5a; border-bottom-color: #5a5a5a; border-radius: 2px; background: linear-gradient(#999, #7a7c7c); color: #4e4e4e; }
.sb svg { width: 10px; height: 10px; flex: none; }
.sb.hot { color: #000; }
.vscroll .nub { height: 5px; }
.hscroll { display: flex; gap: 2px; background: #484848; height: 17px; padding: 1px; margin-top: 1px; }
.hscroll .sb { height: 15px; }
.hscroll .nub { width: 5px; }
.hscroll .hthumb { flex: 1; width: auto; display: flex; justify-content: space-between; padding: 2px 3px; background: linear-gradient(#989898, #666a6a); }
.hthumb i { width: 5px; border-left: 2px solid #444; border-right: 2px solid #444; }
.edit-tools { height: 33px; padding-right: 2px; }
.edit-tools .on { height: 30px; }
.edit-times { margin-left: auto; display: flex; align-items: center; gap: 5px; }
.tri { width: 18px; height: 18px; }

.status { height: 20px; margin-top: 1px; padding: 1px 1px 0 3px; display: flex; justify-content: space-between; align-items: center; }
.record { width: 226px; height: 17px; line-height: 15px; display: flex; justify-content: space-between; align-items: flex-start; padding-left: 2px; border: 1px solid var(--dark); border-right-color: var(--light); border-bottom-color: var(--light); white-space: nowrap; }
.record svg { width: 12px; height: 12px; align-self: flex-end; }
```
